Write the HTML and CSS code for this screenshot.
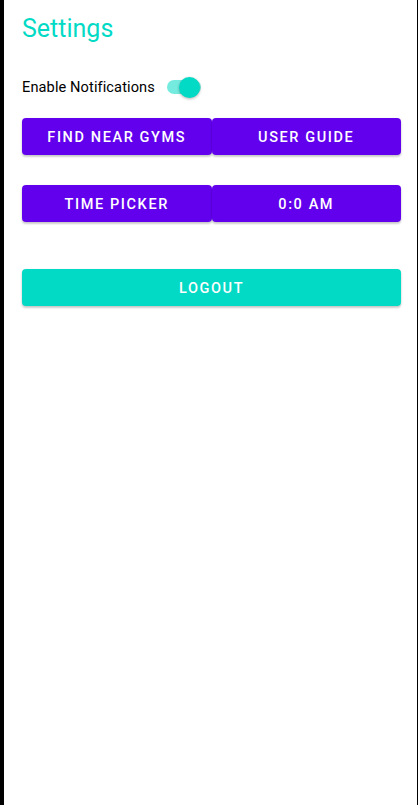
FILE: index.html
```html
<!DOCTYPE html>
<html>
<head>
<meta charset="utf-8">
<link rel="stylesheet" href="styles.css">
</head>
<body>
<div class="screen">
  <h1 class="title">Settings</h1>
  <div class="notif-row">
    <span class="notif-label">Enable Notifications</span>
    <span class="switch"><span class="track"></span><span class="thumb"></span></span>
  </div>
  <div class="btn-row first">
    <button class="btn purple">Find near gyms</button>
    <button class="btn purple">User guide</button>
  </div>
  <div class="btn-row second">
    <button class="btn purple">Time picker</button>
    <button class="btn purple">0:0 AM</button>
  </div>
  <button class="btn teal logout">Logout</button>
</div>
</body>
</html>
```
FILE: styles.css
```css
html, body {
  margin: 0;
  padding: 0;
  height: 100%;
  background: #000;
}
.screen {
  box-sizing: border-box;
  margin-left: 4px;
  margin-right: 1px;
  height: 805px;
  background: #fff;
  padding: 13px 16px 0 18px;
  font-family: Roboto, "Liberation Sans", sans-serif;
}
.title {
  margin: 0;
  font-size: 25px;
  line-height: 32px;
  font-weight: 400;
  color: #03dac5;
}
.notif-row {
  display: flex;
  align-items: center;
  margin-top: 32px;
  height: 20px;
}
.notif-label {
  font-size: 14.6px;
  color: #000;
  letter-spacing: 0.1px;
}
.switch {
  position: relative;
  display: inline-block;
  width: 34px;
  height: 20px;
  margin-left: 12px;
}
.track {
  position: absolute;
  left: 0;
  top: 3px;
  width: 34px;
  height: 14px;
  border-radius: 7px;
  background: #03dac5;
  opacity: 0.55;
}
.thumb {
  position: absolute;
  right: 1px;
  top: 0;
  width: 21px;
  height: 21px;
  border-radius: 50%;
  background: #03dac5;
  box-shadow: 0 1px 3px rgba(0,0,0,0.3);
}
.btn-row {
  display: flex;
}
.btn-row.first {
  margin-top: 21px;
}
.btn-row.second {
  margin-top: 30px;
}
.btn {
  flex: 1;
  box-sizing: border-box;
  height: 37px;
  border: none;
  border-radius: 4px;
  color: #fff;
  font-family: Roboto, "Liberation Sans", sans-serif;
  font-weight: 500;
  font-size: 14.5px;
  letter-spacing: 1.6px;
  text-transform: uppercase;
  box-shadow: 0 2px 2px rgba(0,0,0,0.14), 0 1px 3px rgba(0,0,0,0.12);
  padding: 2px 0 0 0;
}
.purple {
  background: #6200ee;
}
.teal {
  background: #03dac5;
}
.logout {
  display: block;
  width: 100%;
  margin-top: 47px;
}
```
